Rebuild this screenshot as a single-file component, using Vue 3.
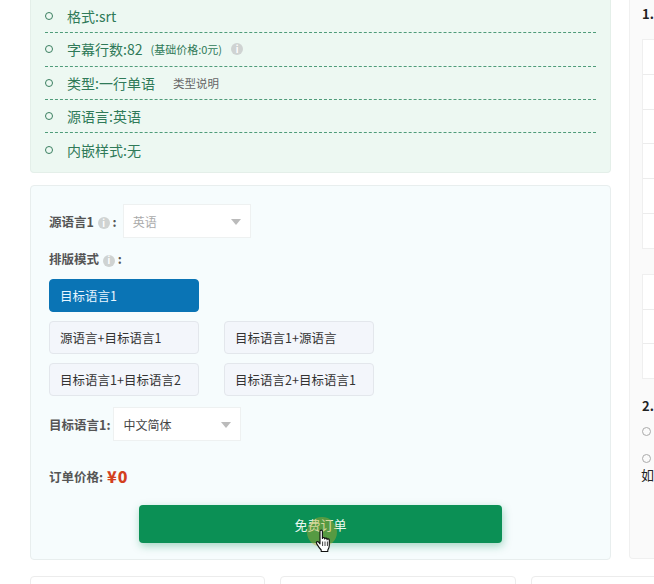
<template>
  <div class="page">
    <div class="columns">
      <div class="main">
        <ul class="info">
          <li v-for="row in infoRows" :key="row.label">
            <span class="dot"></span>
            <span>{{ row.label }}:{{ row.value }}</span>
            <small v-if="row.note" class="note">{{ row.note }}</small>
            <i v-if="row.help" class="help">i</i>
            <small v-if="row.link" class="link">{{ row.link }}</small>
          </li>
        </ul>

        <div class="form">
          <div class="field">
            <label>源语言1 <i class="help">i</i> :</label>
            <div class="select disabled">英语<span class="caret"></span></div>
          </div>
          <div class="layout-label">排版模式 <i class="help">i</i> :</div>
          <div class="modes">
            <button
              v-for="mode in modes"
              :key="mode.name"
              :class="['mode', { active: mode.active, wide: mode.active }]"
            >{{ mode.name }}</button>
          </div>
          <div class="field target">
            <label>目标语言1:</label>
            <div class="select">中文简体<span class="caret"></span></div>
          </div>
          <div class="price">订单价格:<b>¥0</b></div>
          <div class="submit-row">
            <button class="submit">免费订单</button>
            <span class="click-mark"></span>
            <svg class="cursor" width="18" height="24" viewBox="0 0 18 24">
              <path d="M5 2.2c0-1.5 2.4-1.5 2.4 0v7.2c0-1.2 2.3-1.2 2.3 0v.6c0-1.2 2.3-1.2 2.3 0v.7c0-1.1 2.3-1.1 2.3.2v5.6c0 2-.8 3.300-1.500 4.500v1.500H6.200v-1.500C4.800 19.500 3.300 17.500 1.600 14.600c-.9-1.600.9-2.700 2-1.400L5 14.800Z" fill="#fff" stroke="#111" stroke-width="1.100" stroke-linejoin="round"/>
              <path d="M7.600 12.500v4.500M10 12.500v4.500M12.400 12.500v4.500" stroke="#111" stroke-width=".8" fill="none"/>
            </svg>
          </div>
        </div>
      </div>

      <aside class="side">
        <h4>1.</h4>
        <div class="table">
          <div v-for="n in 6" :key="n" class="cell"></div>
        </div>
        <div class="table second">
          <div v-for="n in 3" :key="n" class="cell"></div>
        </div>
        <h4 class="second-title">2.</h4>
        <div class="circle first"></div>
        <div class="circle"></div>
        <p>如</p>
      </aside>
    </div>

    <div class="cards">
      <div class="card one"></div>
      <div class="card two"></div>
      <div class="card three"></div>
    </div>
  </div>
</template>

<script setup>
const infoRows = [
  { label: "格式", value: "srt" },
  { label: "字幕行数", value: "82", note: "(基础价格:0元)", help: true },
  { label: "类型", value: "一行单语", link: "类型说明" },
  { label: "源语言", value: "英语" },
  { label: "内嵌样式", value: "无" }
];

const modes = [
  { name: "目标语言1", active: true },
  { name: "源语言+目标语言1" },
  { name: "目标语言1+源语言" },
  { name: "目标语言1+目标语言2" },
  { name: "目标语言2+目标语言1" }
];
</script>

<style>
html,
body {
  margin: 0;
  background: #fff;
}
</style>

<style scoped>
.page {
  width: 654px;
  height: 584px;
  overflow: hidden;
  padding-left: 30px;
  box-sizing: border-box;
  font-family: "Noto Sans CJK SC", "Liberation Sans", sans-serif;
}

.columns {
  display: flex;
  gap: 18px;
  width: 700px;
}

.main {
  width: 581px;
  flex: none;
}

.info {
  list-style: none;
  margin: 0;
  padding: 0 14px 6px 14px;
  height: 173px;
  box-sizing: border-box;
  background: #edf8f2;
  border: 1px solid #e4efe9;
  border-top: 0;
  border-radius: 0 0 4px 4px;
  color: #2f7a58;
  font-size: 14px;
}

.info li {
  display: flex;
  align-items: center;
  height: 33.300px;
  box-sizing: border-box;
  border-bottom: 1px dashed #4f9c7a;
}

.info li:last-child {
  border-bottom: 0;
}

.dot {
  width: 6px;
  height: 6px;
  border: 1px solid #3a7f60;
  border-radius: 50%;
  margin-right: 14px;
  box-sizing: content-box;
}

.note {
  font-size: 11px;
  margin-left: 8px;
}

.link {
  font-size: 11.500px;
  color: #666;
  margin-left: 18px;
}

.help {
  display: inline-flex;
  align-items: center;
  justify-content: center;
  width: 12px;
  height: 12px;
  border-radius: 50%;
  background: #cfd3d2;
  color: #fff;
  font-size: 9px;
  font-style: normal;
  font-weight: 700;
  margin-left: 9px;
}

.form {
  position: relative;
  margin-top: 12px;
  height: 375px;
  box-sizing: border-box;
  padding: 18px 18px 0;
  background: #f6fcfd;
  border: 1px solid #e8eeee;
  border-radius: 4px;
}

.field {
  display: flex;
  align-items: center;
  gap: 6px;
  color: #555;
  font-size: 12.500px;
}

.field label,
.layout-label,
.price {
  font-weight: 700;
  color: #555;
  font-size: 12.500px;
}

.field label .help,
.layout-label .help {
  margin-left: 1px;
}

.select {
  position: relative;
  width: 128px;
  height: 34px;
  line-height: 34px;
  box-sizing: border-box;
  padding-left: 9px;
  background: #fff;
  border: 1px solid #eef1f1;
  color: #444;
  font-size: 12px;
}

.select.disabled {
  color: #aaa;
}

.caret {
  position: absolute;
  right: 9px;
  top: 14px;
  border-left: 5.500px solid transparent;
  border-right: 5.500px solid transparent;
  border-top: 6px solid #bbb;
}

.layout-label {
  margin-top: 12px;
  line-height: 18px;
}

.modes {
  display: grid;
  grid-template-columns: 150px 150px;
  column-gap: 25px;
  row-gap: 9px;
  margin-top: 11px;
}

.mode {
  height: 33px;
  padding: 0 0 0 10px;
  text-align: left;
  background: #f3f6fb;
  border: 1px solid #e3e7ec;
  border-radius: 4px;
  color: #333;
  font-family: inherit;
  font-size: 12.500px;
}

.mode.active {
  background: #0a74b5;
  border-color: #0a74b5;
  color: #e8f6ff;
}

.mode.wide {
  grid-column: 1 / -1;
  width: 150px;
}

.target {
  margin-top: 11px;
  gap: 3px;
}

.price {
  display: flex;
  align-items: center;
  margin-top: 24px;
  height: 22px;
}

.price b {
  color: #d33f1d;
  font-size: 16px;
  margin-left: 4px;
  letter-spacing: 1px;
}

.submit-row {
  position: relative;
  margin: 18px 0 0 90px;
  width: 363px;
}

.submit {
  display: block;
  width: 363px;
  height: 38px;
  background: #0b9055;
  border: 0;
  border-radius: 4px;
  box-shadow: 1px 3px 8px rgba(11, 144, 85, 0.35);
  color: #e9f8ef;
  font-family: inherit;
  font-size: 13px;
}

.click-mark {
  position: absolute;
  left: 168px;
  top: 12px;
  width: 30px;
  height: 30px;
  border-radius: 50%;
  background: rgba(190, 170, 40, 0.42);
}

.cursor {
  position: absolute;
  left: 176px;
  top: 24px;
}

.side {
  width: 200px;
  height: 559px;
  flex: none;
  box-sizing: border-box;
  padding: 5px 0 0 12px;
  background: #fafafa;
  border: 1px solid #f0f0f0;
  border-top: 0;
  border-radius: 0 0 4px 4px;
  color: #222;
}

.side h4 {
  margin: 0;
  font-size: 13px;
  line-height: 18px;
  font-weight: 700;
}

.table {
  margin-top: 16px;
  background: #fff;
  border: 1px solid #efefef;
}

.table.second {
  margin-top: 25px;
}

.cell {
  height: 33.800px;
  border-bottom: 1px solid #ececec;
}

.cell:last-child {
  border-bottom: 0;
}

.second-title {
  margin-top: 18px !important;
}

.circle {
  width: 7px;
  height: 7px;
  margin-top: 18px;
  border: 1px solid #aaa;
  border-radius: 50%;
}

.circle.first {
  margin-top: 12px;
}

.side p {
  margin: 3px 0 0 -1px;
  font-size: 13px;
  line-height: 18px;
}

.cards {
  display: flex;
  gap: 15px;
  margin-top: 16px;
  width: 700px;
}

.card {
  height: 30px;
  background: #fff;
  border: 1px solid #ececec;
  border-radius: 4px;
  box-sizing: border-box;
}

.card.one {
  width: 236px;
}

.card.two {
  width: 237px;
}

.card.three {
  width: 200px;
}
</style>
